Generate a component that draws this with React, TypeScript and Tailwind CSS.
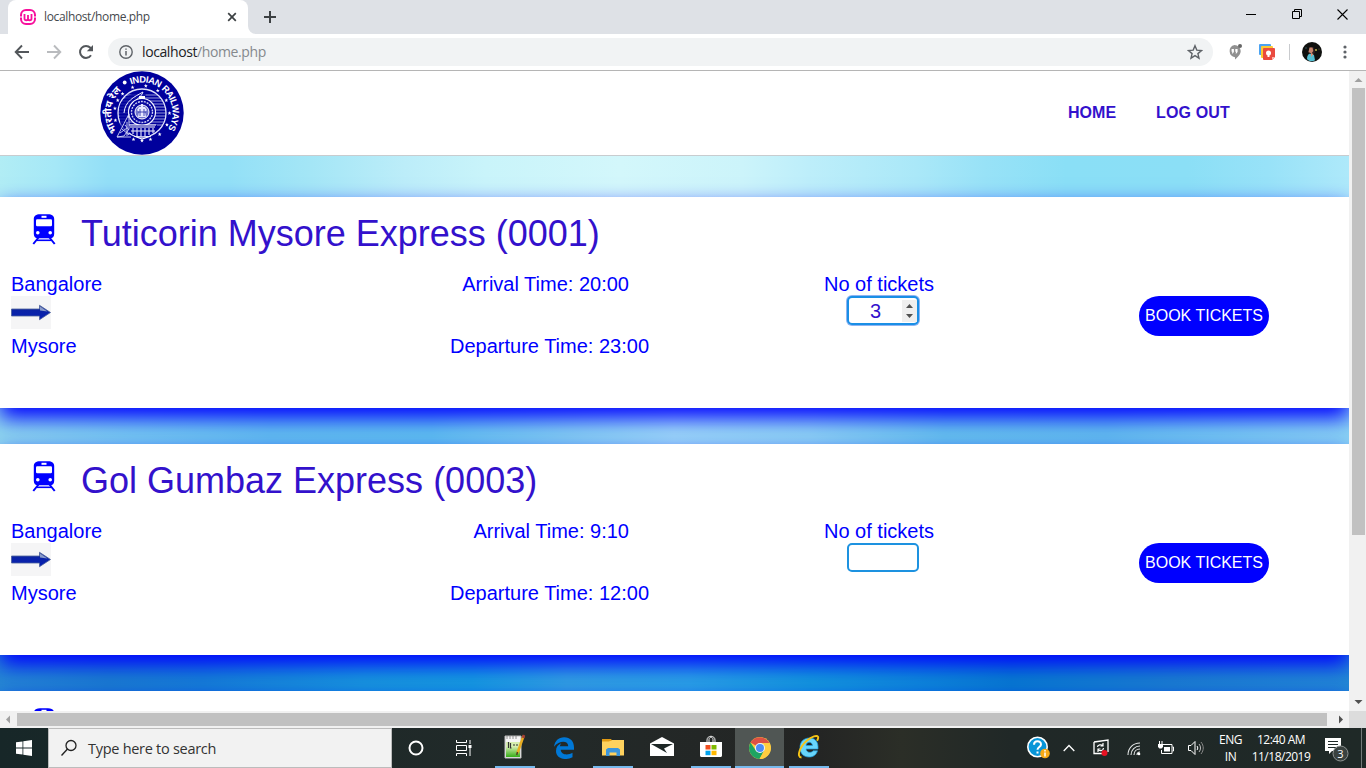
import React from "react";

const UI = "font-['Open_Sans','Noto_Sans',sans-serif]";

function TabStrip() {
  return (
    <div className="flex h-[34px] shrink-0 bg-[#dee1e6] pl-2">
      <div className="flex h-[34px] w-[240px] items-center rounded-t-lg bg-white pl-3 pr-[10px]">
        <svg width="16" height="16" viewBox="0 0 16 16" className="shrink-0">
          <rect x="1" y="1" width="14" height="14" rx="5" fill="none" stroke="#f70f9c" strokeWidth="2" />
          <path d="M0 8h3M13 8h3" stroke="#fff" strokeWidth="1" />
          <path d="M4.5 5v4.5a1.7 1.7 0 0 0 3.5 0V6v3.5a1.7 1.7 0 0 0 3.5 0V5" fill="none" stroke="#f70f9c" strokeWidth="1.8" />
        </svg>
        <span className={`ml-2 text-[12px] leading-4 tracking-[-0.36px] text-[#45494d] ${UI}`}>localhost/home.php</span>
        <svg width="10" height="10" viewBox="0 0 10 10" className="ml-auto mr-[1px]">
          <path d="M1.2 1.2l7.6 7.6M8.8 1.2L1.2 8.8" stroke="#3c4043" strokeWidth="1.7" />
        </svg>
      </div>
      <svg width="8" height="34" viewBox="0 0 8 34" className="shrink-0">
        <path d="M0 26a8 8 0 0 0 8 8H0z" fill="#fff" />
      </svg>
      <svg width="12" height="12" viewBox="0 0 12 12" className="ml-2 mt-[11px]">
        <path d="M6 0v12M0 6h12" stroke="#3c4043" strokeWidth="2" />
      </svg>
      <div className="ml-auto flex pr-[18px] pt-[9px]">
        <svg width="10" height="11" viewBox="0 0 10 11"><path d="M0 5.5h10" stroke="#000" /></svg>
        <svg width="10" height="11" viewBox="0 0 10 11" className="ml-9">
          <path d="M.5 2.5h7v7h-7zM2.5 2.5v-2h7v7h-2" fill="none" stroke="#000" />
        </svg>
        <svg width="11" height="11" viewBox="0 0 11 11" className="ml-[35px]">
          <path d="M.5.5l10 10M10.5.5l-10 10" stroke="#000" strokeWidth="1.1" />
        </svg>
      </div>
    </div>
  );
}

function Toolbar() {
  return (
    <div className="flex h-[37px] shrink-0 items-center border-b border-[#b5b5b5] bg-white pl-[14px]">
      <svg width="16" height="16" viewBox="0 0 16 16">
        <path d="M15 8H2M8 1.5L1.7 8 8 14.5" fill="none" stroke="#53575b" strokeWidth="1.9" />
      </svg>
      <svg width="16" height="16" viewBox="0 0 16 16" className="ml-4">
        <path d="M1 8h13M8 1.5L14.3 8 8 14.5" fill="none" stroke="#b9bbbe" strokeWidth="1.9" />
      </svg>
      <svg width="16" height="16" viewBox="0 0 16 16" className="ml-4">
        <path d="M13 11.3A6 6 0 1 1 12.4 3.8L14 5.5" fill="none" stroke="#53575b" strokeWidth="2" />
        <path d="M15 1v6.2H8.8z" fill="#53575b" />
      </svg>
      <div className="ml-[14px] flex h-7 w-[1105px] items-center rounded-full bg-[#f1f3f4] pl-[11px] pr-[10px]">
        <svg width="14" height="14" viewBox="0 0 14 14">
          <circle cx="7" cy="7" r="6.2" fill="none" stroke="#5f6368" strokeWidth="1.4" />
          <path d="M7 6v4.5M7 3.4v1.4" stroke="#5f6368" strokeWidth="1.5" />
        </svg>
        <span className={`ml-[9px] text-[14px] leading-5 tracking-[-0.4px] text-[#85898d] ${UI}`}>
          <span className="text-[#202124]">localhost</span>/home.php
        </span>
        <svg width="16" height="16" viewBox="0 0 16 16" className="ml-auto">
          <path d="M8 1.7l1.8 4.4 4.7.4-3.6 3.1 1.1 4.6L8 11.7l-4 2.5 1.1-4.6-3.6-3.1 4.7-.4z" fill="none" stroke="#5f6368" strokeWidth="1.4" />
        </svg>
      </div>
      <svg width="14" height="16" viewBox="0 0 14 16" className="ml-[15px]">
        <path d="M6.500 1a6.200 6.200 0 0 1 6.200 6c0 3.700-3.200 6.200-5.700 8.500v-2.300a6.200 6.200 0 0 1-.5-12.200z" fill="#909090" />
        <path d="M3.600 5h2.300v3l-1.200 1.500h-.8l.5-1.700h-.8zM7.300 5h2.300v3L8.400 9.500h-.8l.5-1.700h-.8z" fill="#fff" />
        <circle cx="12" cy="2" r="2" fill="#666" />
      </svg>
      <svg width="16" height="16" viewBox="0 0 16 16" className="ml-[17px]">
        <rect width="12" height="11" rx="1" fill="#4ba3f2" />
        <rect x="2" y="2" width="12" height="12" rx="1" fill="#fcc934" />
        <path d="M5 4h10a1 1 0 0 1 1 1v8l-3 3H5a1 1 0 0 1-1-1V5a1 1 0 0 1 1-1z" fill="#ea4b3f" />
        <path d="M16 13l-3 3v-3z" fill="#ffb2ab" />
        <circle cx="9.500" cy="9" r="2.500" fill="#fff" />
        <path d="M8.500 10h2v3h-2z" fill="#fff" />
      </svg>
      <div className="ml-[14px] h-4 w-px bg-[#c9cbce]" />
      <svg width="20" height="20" viewBox="0 0 20 20" className="ml-3">
        <circle cx="10" cy="10" r="10" fill="#10110f" />
        <path d="M8 5l4 .5 1 5-3 3-4-3z" fill="#302020" />
        <path d="M7.500 5.500h3l.8 3.500-1.800 2.500L6.500 10z" fill="#c9866e" />
        <path d="M5 17c0-4 2-6 4-5l3 1 1 5.300c-3 1.700-6 1-8-1.300z" fill="#54bfd2" />
        <path d="M9 11l2.500 1-2.500 3z" fill="#d79278" />
        <circle cx="14" cy="8" r=".9" fill="#d8cc56" />
        <circle cx="17" cy="7" r=".6" fill="#77783c" />
        <circle cx="4" cy="6" r=".8" fill="#315a63" />
      </svg>
      <svg width="4" height="16" viewBox="0 0 4 16" className="ml-[21px]">
        <circle cx="2" cy="3" r="1.600" fill="#5f6368" />
        <circle cx="2" cy="8" r="1.600" fill="#5f6368" />
        <circle cx="2" cy="13" r="1.600" fill="#5f6368" />
      </svg>
    </div>
  );
}

const starAngles = [-135, -110, -82, -55, -28, 0, 25, 50, 72, 90, 108, 165, 190, 208];

function RailLogo() {
  return (
    <svg width="84" height="84" viewBox="0 0 84 84">
      <defs>
        <path id="rail-en" d="M31.100 13.500A30.500 30.500 0 0 1 65.400 61.600" />
        <path id="rail-hi" d="M17.300 60.500A31 31 0 0 1 25 16.500" />
        <clipPath id="rail-inner"><circle cx="42" cy="42" r="24" /></clipPath>
      </defs>
      <circle cx="42" cy="42" r="41.700" fill="#00009c" />
      <g clipPath="url(#rail-inner)" stroke="#b9bce9" strokeWidth=".8">
        {[24, 27, 30, 33, 36, 39, 42, 45, 48, 51, 54].map((y) => <path key={y} d={`M16 ${y}H68`} />)}
      </g>
      <circle cx="42" cy="42" r="24" fill="none" stroke="#dfe1fa" strokeWidth="1.300" />
      <path d="M19 39c0-9 8-15 16-17l8-2 3 4-4 5-5 1-8 13v19l-8-2z" fill="#00009c" fillOpacity=".75" />
      <path d="M24 42c1-12 10-16 19-21-2 6-8 7-12 14l-3 12" fill="none" stroke="#eef" strokeWidth="1" />
      <circle cx="42" cy="41" r="13.500" fill="#00009c" stroke="#f2f3ff" strokeWidth="1.200" />
      <circle cx="42" cy="41" r="10.500" fill="#0a0aa0" stroke="#cfd1f5" strokeWidth="1.400" strokeDasharray="2 1" />
      <circle cx="42" cy="41" r="7" fill="#7276cc" stroke="#fff" strokeWidth="1" />
      <path d="M39 36h6l2 3-2 2 1 5h-8l1-5-2-2zM41 33h2v3h-2z" fill="#e8e9ff" />
      <path d="M40 38v7M44 38v7M38 41h8" stroke="#2023a4" strokeWidth=".8" />
      <path d="M39 25h6v3h-6z" fill="#fff" />
      <path d="M28 54h29v5l-8 6H35l-7-5z" fill="#00009c" />
      <path d="M29 54h27M30 56h25M31 60h24M34 65l8 3 9-3" stroke="#fff" strokeWidth="1.200" fill="none" />
      <path d="M33 57v6M37 57v8M41 57v9M45 57v9M49 57v7M53 57v5" stroke="#d4d6f5" strokeWidth="1.200" />
      <path d="M29 43L17 66l7-1 5-7zM27 51v14M17 66h14M22 58l7 6M20 62l7-5M25 54l4 5" fill="none" stroke="#d4d6f5" strokeWidth=".9" />
      {starAngles.map((a) => {
        const t = (a * Math.PI) / 180;
        return <path key={a} transform={`translate(${42 + 27.500 * Math.cos(t)} ${42 + 27.500 * Math.sin(t)})`} d="M0-1.900L.5-.5 1.900-.4.8.5 1.200 1.900 0 1.100-1.200 1.900-.8.5-1.900-.4-.5-.5z" fill="#fff" />;
      })}
      <circle cx="24.700" cy="11.500" r="1.900" fill="#fff" />
      <text fill="#fff" fontSize="9.300" fontWeight="700" className="font-['Liberation_Sans',sans-serif]">
        <textPath href="#rail-en" textLength="76">INDIAN RAILWAYS</textPath>
      </text>
      <text fill="#fff" fontSize="10" className="font-['Noto_Sans_Devanagari','Noto_Sans',sans-serif]">
        <textPath href="#rail-hi">भारतीय रेल</textPath>
      </text>
    </svg>
  );
}

function TrainIcon() {
  return (
    <svg width="24" height="31" viewBox="0 0 24 31">
      <path d="M8 .3h8c4 0 6.200 1.700 6.200 5v14.500c0 3-1.600 4.500-4.200 4.500H6c-2.600 0-4.200-1.500-4.200-4.500V5.300C1.800 2 4 .3 8 .3z" fill="#00f" />
      <rect x="9.500" y="1.800" width="5" height="2" fill="#fff" />
      <rect x="4" y="5.300" width="16" height="6.900" rx="1.200" fill="#fff" />
      <circle cx="5.800" cy="18.700" r="1.800" fill="#fff" />
      <circle cx="18.200" cy="18.700" r="1.800" fill="#fff" />
      <path d="M6.500 23.500L1.300 30M17.500 23.500l5.200 6.500" stroke="#00f" strokeWidth="2" />
      <path d="M5 26.300h14" stroke="#00f" strokeWidth="1.600" />
    </svg>
  );
}

function ArrowPicture() {
  return (
    <svg width="40" height="33" viewBox="0 0 40 33" className="block">
      <defs>
        <linearGradient id="shaft" x2="0" y2="1">
          <stop offset="0" stopColor="#44548c" />
          <stop offset=".35" stopColor="#0a23a5" />
          <stop offset="1" stopColor="#0720b4" />
        </linearGradient>
      </defs>
      <rect width="40" height="33" fill="#f5f5f6" />
      <path d="M.5 13h28V9.300L39.500 16.500 28.500 23.700V20H.5z" fill="url(#shaft)" stroke="#4a5f9c" strokeWidth=".8" />
      <path d="M29 10.500l7.500 5-7.500-1z" fill="#8b9cc9" />
    </svg>
  );
}

type Train = { name: string; arrival: string; departure: string; tickets: string };

const trains: Train[] = [
  { name: "Tuticorin Mysore Express (0001)", arrival: "20:00", departure: "23:00", tickets: "3" },
  { name: "Gol Gumbaz Express (0003)", arrival: "9:10", departure: "12:00", tickets: "" },
];

function TicketField({ value }: { value: string }) {
  return value ? (
    <div className="ml-[23px] flex h-[29px] w-[72px] items-center rounded-[5px] border-2 border-[#1a8fe6] bg-white ring-1 ring-[#8db4f2]">
      <span className="w-[53px] text-center leading-6 text-[#3311cc]">{value}</span>
      <svg width="15" height="22" viewBox="0 0 15 22">
        <rect width="15" height="22" fill="#efefef" />
        <path d="M4 8l3.500-4L11 8zM4 14l3.500 4 3.500-4z" fill="#505050" />
      </svg>
    </div>
  ) : (
    <div className="ml-[23px] h-[29px] w-[72px] rounded-[5px] border-2 border-[#1d92e0] bg-white" />
  );
}

function TrainCard({ train }: { train: Train }) {
  return (
    <section className="relative h-[211px] shrink-0 bg-white pt-4 text-[20px] leading-6 text-[#0000ff] shadow-[0_10px_20px_#0000ff]">
      <div className="flex h-[42px] pl-8">
        <div className="pt-px"><TrainIcon /></div>
        <h2 className="ml-[25px] whitespace-nowrap text-[36px] leading-[42px] text-[#3311cc]">{train.name}</h2>
      </div>
      <div className="mt-[17px] flex whitespace-nowrap pl-[11px]">
        <div className="w-[439px]">
          <div>Bangalore</div>
          <ArrowPicture />
          <div className="mt-[5px]">Mysore</div>
        </div>
        <div className="w-[199px] text-right">
          <div className="pr-5">Arrival Time: {train.arrival}</div>
          <div className="mt-[38px]">Departure Time: {train.departure}</div>
        </div>
        <div className="ml-[175px] w-[110px]">
          <div>No of tickets</div>
          <TicketField value={train.tickets} />
        </div>
        <button className="ml-[205px] mt-6 h-10 w-[130px] rounded-full bg-[#0000ff] text-[16px] leading-10 text-white">BOOK TICKETS</button>
      </div>
    </section>
  );
}

function Page() {
  return (
    <main className="flex h-[640px] w-[1349px] flex-col overflow-hidden bg-white font-['Liberation_Sans',Arial,sans-serif]">
      <header className="flex h-[85px] shrink-0 items-center border-b border-[#c8cccf] pl-[100px] text-[16px] font-bold text-[#3311cc]">
        <RailLogo />
        <nav className="ml-auto flex pr-[119px]">
          <a>HOME</a>
          <a className="ml-10 tracking-[0.15px]">LOG OUT</a>
        </nav>
      </header>
      <div className="h-[41px] shrink-0 bg-[linear-gradient(90deg,#b1edf5_0%,#a6e8f7_4%,#93dff7_8%,#93e0f7_17%,#a4e6f6_23%,#bcedf9_30%,#c9f4fa_36%,#d3f7fb_46%,#ccf4fa_55%,#bdeefa_60%,#aae8f8_68%,#98e2f7_73%,#8adff6_79%,#8bdff6_88%,#98e2f8_94%,#aee9fa_100%)]" />
      <TrainCard train={trains[0]} />
      <div className="h-9 shrink-0 bg-[linear-gradient(90deg,#8fd7ee_0%,#78cdf0_10%,#65c3ee_20%,#62c5ee_32%,#85d2f1_42%,#a0ddf7_50%,#91d8f3_60%,#69c7ec_70%,#65c2ed_82%,#76ccf0_90%,#8cd6f3_100%)]" />
      <TrainCard train={trains[1]} />
      <div className="h-9 shrink-0 bg-[linear-gradient(90deg,#2689d2_0%,#1b80cd_8%,#1682d3_15%,#189ada_27%,#169fdd_35%,#32a4df_42%,#2ba6e3_51%,#149cda_60%,#0e8bd7_68%,#087ecd_75%,#1b82cd_87%,#238bd3_100%)]" />
      <section className="relative h-[211px] shrink-0 bg-white pl-8 pt-[17px] shadow-[0_10px_20px_#0000ff]"><TrainIcon /></section>
    </main>
  );
}

function VerticalScroll() {
  return (
    <div className="flex h-[640px] w-[17px] flex-col items-center justify-between bg-[#f1f1f1] pl-px">
      <svg width="15" height="17" viewBox="0 0 15 17"><path d="M3.500 11l4-4 4 4z" fill="#a0a0a0" /></svg>
      <div className="mb-auto h-[447px] w-[13px] bg-[#c1c1c1]" />
      <svg width="15" height="17" viewBox="0 0 15 17"><path d="M3.500 6l4 4 4-4z" fill="#505050" /></svg>
    </div>
  );
}

function HorizontalScroll() {
  return (
    <div className="flex h-[17px] shrink-0 bg-[#dcdcdc]">
      <div className="flex w-[1349px] items-center justify-between bg-[#f1f1f1]">
        <svg width="17" height="17" viewBox="0 0 17 17"><path d="M10 4.500v8l-4-4z" fill="#a0a0a0" /></svg>
        <div className="mr-auto h-[13px] w-[1310px] bg-[#c1c1c1]" />
        <svg width="17" height="17" viewBox="0 0 17 17"><path d="M7 4.500v8l4-4z" fill="#505050" /></svg>
      </div>
    </div>
  );
}

function TaskCell({ children, open, active }: { children: React.ReactNode; open?: boolean; active?: boolean }) {
  return (
    <div className={`flex h-10 w-[49px] flex-col items-center ${active ? "bg-[#505654]" : ""}`}>
      <div className="flex h-[38px] items-center justify-center">{children}</div>
      {open && <div className={`h-[2px] bg-[#76b9ed] ${active ? "w-full" : "w-10"}`} />}
    </div>
  );
}

function Taskbar() {
  return (
    <footer className={`flex h-10 shrink-0 bg-[linear-gradient(90deg,#172728_0%,#222a29_38%,#242524_60%,#2b2e27_66%,#202827_74%,#1f2927_100%)] text-white ${UI}`}>
      <div className="flex w-12 items-center justify-center">
        <svg width="16" height="16" viewBox="0 0 16 16"><path d="M0 2.300L6.500 1.400v6.200H0zM7.300 1.300L16 0v7.600H7.300zM0 8.400h6.500v6.200L0 13.700zM7.300 8.400H16V16l-8.700-1.300z" fill="#fff" /></svg>
      </div>
      <div className="flex w-[344px] items-center border border-[#bcbcbc] bg-[#f2f2f2] pl-[11px]">
        <svg width="18" height="18" viewBox="0 0 18 18">
          <circle cx="11" cy="6.500" r="5" fill="none" stroke="#222" strokeWidth="1.300" />
          <path d="M7.500 10L1.500 16.500" stroke="#222" strokeWidth="1.400" />
        </svg>
        <span className="ml-[10px] pt-px text-[14.500px] tracking-[-0.28px] text-[#333]">Type here to search</span>
      </div>
      <div className="flex w-12 items-center justify-center">
        <svg width="16" height="16" viewBox="0 0 16 16"><circle cx="8" cy="8" r="6.500" fill="none" stroke="#fff" strokeWidth="2" /></svg>
      </div>
      <div className="flex w-12 items-center justify-center">
        <svg width="16" height="16" viewBox="0 0 16 16" className="-mt-px">
          <path d="M.5 0v2.500h10V0M.5 16v-2.500h10V16M.5 5.500h10v5H.5zM14 0v4M14 8v8" fill="none" stroke="#fff" />
          <path d="M12.500 5h3v3h-3z" fill="#fff" />
        </svg>
      </div>
      <div className="ml-[2px] flex">
        <TaskCell open>
          <svg width="24" height="26" viewBox="0 0 24 26">
            <defs><linearGradient id="np" x2="0" y2="1"><stop offset=".3" stopColor="#d6eeb0" /><stop offset="1" stopColor="#36ad17" /></linearGradient></defs>
            <path d="M2 2h16v22H2z" fill="#f5f5f5" stroke="#bbb" />
            <path d="M3 8h14v15H3z" fill="url(#np)" />
            <path d="M4 2v3M7 2v3M10 2v3M13 2v3" stroke="#777" strokeWidth=".8" />
            <path d="M5.500 8v6M7.500 9v5h1M10 11h2M13 11h2" stroke="#333" strokeWidth="1.200" fill="none" />
            <path d="M20.500 2l-6 17" stroke="#e8ad22" strokeWidth="2.500" />
            <path d="M21 1l-1 3" stroke="#a53f35" strokeWidth="2.500" />
            <path d="M14.500 18l-.8 3" stroke="#554020" strokeWidth="1.500" />
          </svg>
        </TaskCell>
        <TaskCell>
          <svg width="20" height="22" viewBox="0 0 20 22" className="mt-px">
            <path d="M0 9.700C.8 4 4.500.2 10.200.2c6 0 9.800 4.200 9.800 10.300v2.300H6.700c.2 5 7 6 11.800 3v4.500C10.500 24.300 2 21 2 14c0-4 2.200-6.400 5.200-7.700-.8.900-1.100 1.900-1.300 3h8.300c.4-6-9-6.300-14.200.4z" fill="#0078d7" />
          </svg>
        </TaskCell>
        <TaskCell open>
          <svg width="22" height="19" viewBox="0 0 22 19" className="mt-px">
            <path d="M0 1h9l1.500 2H22v14H0z" fill="#e6a11a" />
            <path d="M0 3h9l1-1h12v15.500H0z" fill="#ffd25e" />
            <path d="M0 1h8.500v1.500L7 3.500H0z" fill="#e39b13" />
            <path d="M4 18v-6.500L6 10h10l2 1.500V18h-3.500v-3.500h-7V18z" fill="#3c96dc" />
          </svg>
        </TaskCell>
        <TaskCell>
          <svg width="24" height="20" viewBox="0 0 24 20">
            <path d="M0 6.500L12 0l12 6.500V19H0z" fill="#fff" />
            <path d="M1 7h22l-9 4.500 3 4.500z" fill="#1d2726" />
          </svg>
        </TaskCell>
        <TaskCell open>
          <svg width="24" height="24" viewBox="0 0 24 24">
            <path d="M8 8V5c0-5 8-5 8 0v3M10 7V4.500c0-3 4-3 4 0V7" fill="none" stroke="#eee" strokeWidth="1" />
            <path d="M1 7h22v13.500c0 1-1 1.500-2 1.500H3c-1 0-2-.5-2-1.500z" fill="#fff" />
            <path d="M6.500 10h5v4.500h-5z" fill="#f04e1f" /><path d="M12.500 10h5v4.500h-5z" fill="#7eb900" />
            <path d="M6.500 15.700h5v4.500h-5z" fill="#00a3ee" /><path d="M12.500 15.700h5v4.500h-5z" fill="#ffb800" />
          </svg>
        </TaskCell>
        <TaskCell open active>
          <svg width="22" height="22" viewBox="0 0 22 22" className="mt-px">
            <circle cx="11" cy="11" r="11" fill="#ffcd40" />
            <path d="M11 11L1.500 5.500A11 11 0 0 1 20.500 6H11z" fill="#dd5144" />
            <path d="M1.500 5.500A11 11 0 0 0 10.500 22l4.700-8.500L11 11 6.800 13.600z" fill="#1da462" />
            <path d="M20.500 6A11 11 0 0 1 10.500 22l4.800-8.500L15 6z" fill="#ffcd40" />
            <circle cx="11" cy="11" r="5" fill="#eff4fb" /><circle cx="11" cy="11" r="4" fill="#4c8bf5" />
          </svg>
        </TaskCell>
        <TaskCell open>
          <svg width="24" height="24" viewBox="0 0 24 24">
            <path d="M3 12.500C3 6.500 7 3 12.500 3c6 0 9 4 8.500 11H9c.5 4 5.500 4.200 7 1.800h4.500C19 20.500 16 22 12 22c-5.500 0-9-3.700-9-9.500zm6-2h6.500c-.5-4.200-6-4.200-6.500 0z" fill="#69d5fb" stroke="#1d9fe0" strokeWidth=".7" />
            <path d="M4.500 22.500C-1 22 3 11.500 10 5.500 15 1 20 .2 21 1.700c.6 1-.2 2.800-.9 4.100" fill="none" stroke="#f7c515" strokeWidth="1.900" />
          </svg>
        </TaskCell>
      </div>
      <div className="ml-auto flex h-10 items-center">
        <div className="flex w-8 justify-center">
          <svg width="24" height="24" viewBox="0 0 24 24">
            <circle cx="11.500" cy="11" r="9.700" fill="#0795d8" stroke="#fff" strokeWidth="1.600" />
            <path d="M8 8.700c0-4.500 7-4.400 7-.3 0 2.500-3.500 2.600-3.500 5.300M11.500 15.500v2" stroke="#fff" strokeWidth="2" fill="none" />
            <circle cx="19" cy="17.500" r="4.800" fill="#f6aa18" /><path d="M19 16.500v4M19 14v1.500" stroke="#fff" strokeWidth="1.500" />
          </svg>
        </div>
        <div className="flex w-[30px] justify-center"><svg width="12" height="8" viewBox="0 0 12 8"><path d="M.7 7L6 1.500 11.300 7" stroke="#fff" strokeWidth="1.300" fill="none" /></svg></div>
        <div className="flex w-[34px] justify-center">
          <svg width="18" height="18" viewBox="0 0 18 18">
            <path d="M2 3l14-2v12M2 3v11.500h9" stroke="#fff" fill="none" strokeWidth="1.300" />
            <path d="M5.500 8c0-2.500 4-3 5.500-1M11 4v3H8.500M11.500 9c-.2 3-4 3.500-5.500 1.500M6 13v-3h2.500" fill="none" stroke="#fff" strokeWidth="1.200" />
            <circle cx="12.500" cy="14" r="3" fill="#e81123" />
          </svg>
        </div>
        <div className="flex w-8 justify-center">
          <svg width="16" height="16" viewBox="0 0 16 16">
            <path d="M2 15C2 8 7 3 14 3M5 15c0-5 4-9 9-9M8 15c0-3.500 2.500-6 6-6M11 15c0-2 1-3 3-3" stroke="#e5e8e8" strokeWidth="1.100" fill="none" />
            <circle cx="13" cy="14" r="1.300" fill="#fff" />
          </svg>
        </div>
        <div className="flex w-[30px] justify-center">
          <svg width="17" height="14" viewBox="0 0 17 14">
            <path d="M6 3.500h9v9H4.500V9M15.500 6h1v4h-1" stroke="#fff" fill="none" />
            <path d="M7 6h6v4.500H7zM1 3h5v3L4.500 7.500h-2L1 6zM2 0h1v3H2zM4.500 0h1v3h-1z" fill="#fff" />
          </svg>
        </div>
        <div className="flex w-8 justify-center">
          <svg width="18" height="16" viewBox="0 0 18 16">
            <path d="M1.500 5.500h2.500l4-4v13l-4-4H1.500z" stroke="#fff" fill="none" />
            <path d="M10 6c1 1.300 1 2.700 0 4" stroke="#fff" fill="none" /><path d="M12 4c2 2.500 2 5.500 0 8" stroke="#bbb" fill="none" /><path d="M14 2c3 4 3 8 0 12" stroke="#888" fill="none" />
          </svg>
        </div>
        <div className="w-[37px] text-center text-[12px] leading-[17px] tracking-[-0.4px]"><div>ENG</div><div>IN</div></div>
        <div className="w-16 whitespace-nowrap text-center text-[12px] leading-[17px] tracking-[-0.5px]"><div>12:40 AM</div><div>11/18/2019</div></div>
        <div className="flex w-[48px] justify-center">
          <svg width="26" height="26" viewBox="0 0 26 26" className="mt-[3px]">
            <path d="M1 1h16v13H8l-3 3v-3H1z" fill="#fff" />
            <path d="M4 4.500h10M4 7.500h10M4 10.500h8" stroke="#1f2927" />
            <circle cx="16.500" cy="16.500" r="7.500" fill="#3a4240" stroke="#8d9291" />
            <text x="16.500" y="20.500" textAnchor="middle" fontSize="11" fill="#fff">3</text>
          </svg>
        </div>
        <div className="h-10 w-[5px] border-l border-[#737a79]" />
      </div>
    </footer>
  );
}

export default function App() {
  return (
    <div className="flex h-[768px] w-[1366px] flex-col overflow-hidden bg-white">
      <TabStrip />
      <Toolbar />
      <div className="flex h-[640px] shrink-0">
        <Page />
        <VerticalScroll />
      </div>
      <HorizontalScroll />
      <Taskbar />
    </div>
  );
}
